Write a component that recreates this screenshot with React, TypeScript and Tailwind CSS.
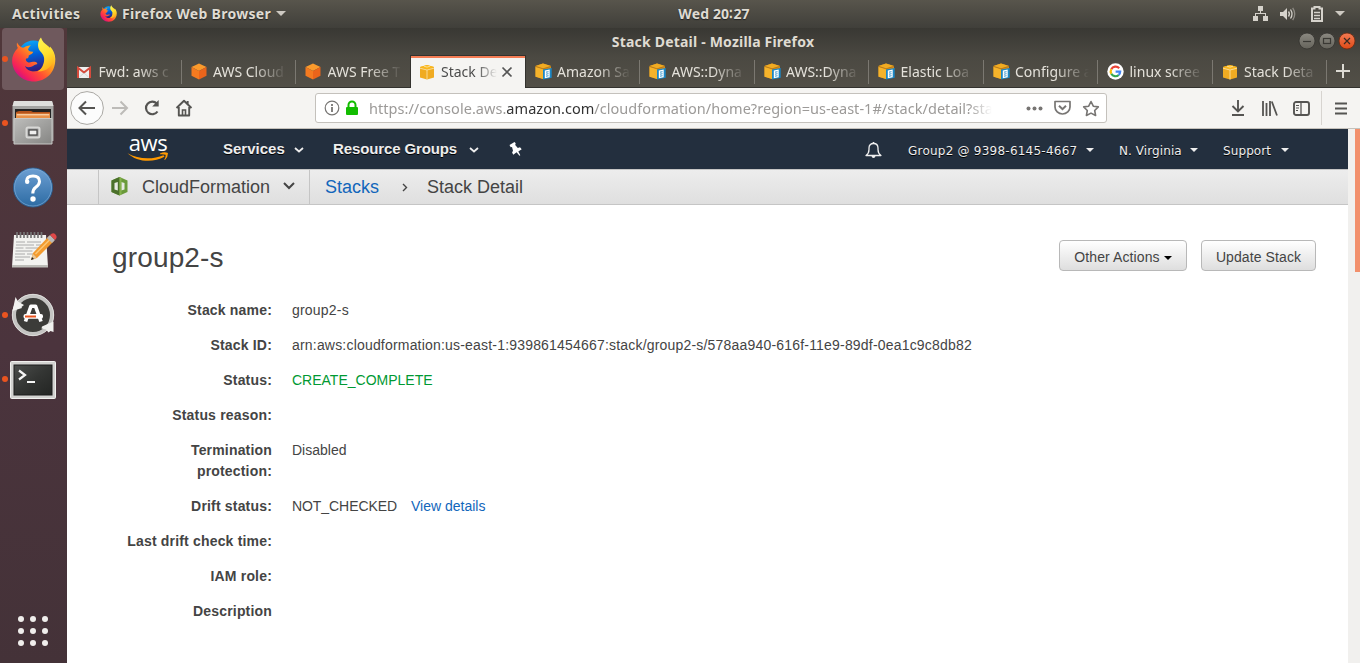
import React from "react";

const UBUNTU = "font-['Noto_Sans',sans-serif]";
const ARIAL = "font-['Liberation_Sans',sans-serif]";

function FirefoxIcon({ size, id }: { size: number; id: string }) {
  return (
    <svg width={size} height={size} viewBox="0 0 44 45" className="shrink-0">
      <defs>
        <linearGradient id={id + "a"} x1="0.95" y1="0.1" x2="0.15" y2="0.9">
          <stop offset="0" stopColor="#fff23f" />
          <stop offset="0.35" stopColor="#ffa01c" />
          <stop offset="0.62" stopColor="#ff5033" />
          <stop offset="0.85" stopColor="#f5215a" />
          <stop offset="1" stopColor="#c8108b" />
        </linearGradient>
        <linearGradient id={id + "b"} x1="0.4" y1="0" x2="0.6" y2="1">
          <stop offset="0" stopColor="#0ba6f7" />
          <stop offset="0.45" stopColor="#0060d8" />
          <stop offset="1" stopColor="#361475" />
        </linearGradient>
        <linearGradient id={id + "c"} x1="0.4" y1="0" x2="0.7" y2="1">
          <stop offset="0" stopColor="#fff34f" />
          <stop offset="0.5" stopColor="#ffdf2e" />
          <stop offset="1" stopColor="#ffa516" />
        </linearGradient>
      </defs>
      <circle cx="22" cy="19" r="15.5" fill={`url(#${id}b)`} />
      <path
        fill={`url(#${id}a)`}
        d="M5.500 5.500C5 8 5.500 9.500 6.300 11C2.500 15 0.500 19 0.600 24C1 36 11 44.500 22.500 44.500C34 44.500 44 36 43.800 22C43.700 17 41.500 12.500 38.500 9.500C39 14 36 19 33 22C34.500 29 29 34.500 22.500 34.500C18 34.500 14.500 32 13.500 29C17 31.500 21 29.500 23 28C25 27.500 26.500 27 25.500 26C23 23.500 19.500 26 17 25.500C14.500 25 14 22.500 14.500 21.500C16 21.500 17.500 21 17.200 18.500C20 17.500 21.500 16 21.700 14.800C18.500 15 16.500 13.500 16.500 12.300C17 11 18.500 9 19.500 8.200C15.500 8.500 13 10 11.500 10.800C8.500 10 7 8 5.500 5.500Z"
      />
      <path
        fill={`url(#${id}c)`}
        d="M29.500 0.500C26 4.500 25.500 10 28.500 14C32.500 18 34 22 31.500 28C30.500 31 28.500 33 26 34.500C34 35 42 29.500 42.500 21C42.800 15 39.500 11.500 36.500 9C33 6.500 30.500 4 29.500 0.500Z"
      />
    </svg>
  );
}

function Gmail() {
  return (
    <svg width="16" height="16" viewBox="0 0 16 16">
      <path d="M1 3h14v11H1z" fill="#eee" />
      <path d="M2 14V3.800L8 8.500l6-4.700V14" fill="none" stroke="#d54b3d" strokeWidth="2" />
      <path d="M3.500 13L8 9l4.500 4" fill="none" stroke="#c9c9c9" strokeWidth="0.700" />
    </svg>
  );
}

function OrangeCube() {
  return (
    <svg width="17" height="17" viewBox="0 0 17 17">
      <path d="M8 0.500L15.500 4 8 8 0.500 4z" fill="#fa9a2c" />
      <path d="M0.500 4L8 8v8.500L0.500 12.800z" fill="#f47a20" />
      <path d="M15.500 4L8 8v8.500l7.500-3.700z" fill="#ea641b" />
    </svg>
  );
}

function YellowBox() {
  return (
    <svg width="16" height="16" viewBox="0 0 16 16">
      <path d="M8 1l7 2v10.500L8 15.500 1 13.500V3z" fill="#f0ab22" />
      <path d="M1 3l7-2 7 2-7 2.200z" fill="#fbb91c" />
      <path d="M1 4.200L8 6l7-1.800M8 6v9.500M5 2.200L8 3.100l3-.9" fill="none" stroke="#fbe0a0" strokeWidth="0.900" />
    </svg>
  );
}

function BlueBox() {
  return (
    <svg width="17" height="17" viewBox="0 0 17 17">
      <path d="M0.500 3L8 0.500 16 3v8l-8 5-7.500-2.500z" fill="#d88e1b" />
      <path d="M0.500 3L8 5.500 16 3 8 0.500z" fill="#f0ab22" />
      <path d="M0.500 3.700L8 6v10L0.500 13.700z" fill="#f5b32b" />
      <path d="M0.500 3.400L8 5.800l8-2.400" fill="none" stroke="#a8701a" strokeWidth="0.700" />
      <path d="M8 6.500L16.700 5v9.800L8 16.500z" fill="#1b87c6" />
      <path d="M9.800 7.400l4.900-.9v7.800l-4.900.9z" fill="#fff" />
      <path d="M11 9.200l2.500-.5M11 11.200l2.500-.5M11 13.200l2.500-.5" stroke="#1b87c6" strokeWidth="0.900" />
    </svg>
  );
}

function GoogleIcon() {
  return (
    <svg width="17" height="17" viewBox="0 0 17 17">
      <circle cx="8.500" cy="8.500" r="8.200" fill="#fff" />
      <g fill="none" strokeWidth="2.200">
        <path d="M12.200 5.200A4.800 4.800 0 0 0 4.300 6.200" stroke="#ea4335" />
        <path d="M4.300 6.200A4.800 4.800 0 0 0 4.300 10.800" stroke="#fbbc05" />
        <path d="M4.300 10.800A4.800 4.800 0 0 0 11.700 12" stroke="#34a853" />
        <path d="M11.700 12A4.800 4.800 0 0 0 13.200 8.600H8.600" stroke="#4285f4" />
      </g>
    </svg>
  );
}

type TabInfo = { icon: React.ReactNode; title: string; active?: boolean; line?: boolean };

const tabs: TabInfo[] = [
  { icon: <Gmail />, title: "Fwd: aws c", line: true },
  { icon: <OrangeCube />, title: "AWS Cloud", line: true },
  { icon: <OrangeCube />, title: "AWS Free T" },
  { icon: <YellowBox />, title: "Stack De", active: true },
  { icon: <BlueBox />, title: "Amazon Sa", line: true },
  { icon: <BlueBox />, title: "AWS::Dyna", line: true },
  { icon: <BlueBox />, title: "AWS::Dyna", line: true },
  { icon: <BlueBox />, title: "Elastic Loa", line: true },
  { icon: <BlueBox />, title: "Configure a", line: true },
  { icon: <GoogleIcon />, title: "linux scree", line: true },
  { icon: <YellowBox />, title: "Stack Deta", line: true },
];

function Tab({ icon, title, active, line }: TabInfo) {
  return (
    <div
      className={
        active
          ? "relative z-10 -ml-[1px] flex h-[33px] w-[116px] shrink-0 items-center border-x border-t border-[#33322e] bg-[#f5f4f2] pl-[8px] shadow-[inset_0_2px_0_#f47c54]"
          : "flex h-[33px] w-[114.500px] shrink-0 items-center pl-[9px]"
      }
    >
      <span className="flex w-[22.500px] shrink-0 items-center">{icon}</span>
      <span
        className={
          active
            ? "w-[58px] overflow-hidden whitespace-nowrap text-[14px] leading-[20px] text-[#4c4c4c] [mask-image:linear-gradient(to_right,#000_36px,transparent_56px)]"
            : "w-[76px] overflow-hidden whitespace-nowrap text-[14px] leading-[20px] text-[#e4e1da] [mask-image:linear-gradient(to_right,#000_40px,transparent_74px)]"
        }
      >
        {title}
      </span>
      {active && (
        <svg width="12" height="12" viewBox="0 0 12 12" className="ml-[2px]">
          <path d="M1.500 1.500l9 9M10.500 1.500l-9 9" stroke="#555" strokeWidth="1.700" />
        </svg>
      )}
      {line && <span className="ml-auto h-[24px] w-px bg-[#7b7871]" />}
    </div>
  );
}

function TopBar() {
  return (
    <header className={`${UBUNTU} flex h-[28px] shrink-0 items-center bg-linear-to-b from-[#58554c] to-[#403f3a] text-[14px] font-bold text-[#dfdbd2] [text-shadow:0_1px_1px_#222]`}>
      <div className="flex w-[600px] items-center pb-[1px] pl-[12px]">
        <span className="w-[88px] text-[14px] tracking-[0.340px]">Activities</span>
        <FirefoxIcon size={17} id="fs" />
        <span className="ml-[5px] w-[149px] whitespace-nowrap text-[14px] tracking-[0.300px]">Firefox Web Browser</span>
        <svg width="10" height="5" className="ml-[5px]"><path d="M0 0h10L5 5z" fill="#cdc9c2" /></svg>
      </div>
      <div className="w-[228px] pb-[2px] text-center text-[14px] tracking-[0.150px]">Wed 20∶27</div>
      <div className="ml-auto flex items-center pb-[1px] pr-[15px]">
        <svg width="15" height="15" viewBox="0 0 15 15" fill="#d5d2cb" className="-mr-px">
          <path d="M5 0h5v5H8v2h5v3h2v5h-5v-5h2V8H3v2h2v5H0v-5h2V7h5V5H5z" />
        </svg>
        <svg width="16" height="14" viewBox="0 0 16 14" className="ml-[13px]">
          <path d="M0 5h3l4-4v12L3 9H0z" fill="#d5d2cb" />
          <path d="M8.500 4.500q1.800 2.500 0 5M10.500 2.500q3 4.500 0 9" stroke="#d5d2cb" strokeWidth="1.300" fill="none" />
          <path d="M12.700 0.800q4 6 0 12.400" stroke="#8e8b84" strokeWidth="1.300" fill="none" />
        </svg>
        <svg width="12" height="16" viewBox="0 0 12 16" className="ml-[15px]" fill="none" stroke="#d5d2cb">
          <path d="M1 2.500h2.500V1h5v1.500H11V15H1z" strokeWidth="2" />
          <path d="M3 6.500h6M3 9.500h6M3 12.500h6" strokeWidth="1.400" />
        </svg>
        <svg width="10" height="5" className="ml-[12px]"><path d="M0 0h10L5 5z" fill="#cdc9c2" /></svg>
      </div>
    </header>
  );
}

function DockItem({ children, running, selected }: { children: React.ReactNode; running?: boolean; selected?: boolean }) {
  return (
    <div className="flex h-[64px] w-[67px] items-start pl-[2px]">
      <div className={selected ? "flex h-[62px] w-[62px] items-center rounded-[4px] bg-[#6f595d]" : "flex h-[62px] w-[62px] items-center"}>
        <span className={running ? "h-[6px] w-[6px] rounded-full bg-[#e95420]" : "h-[6px] w-[6px]"} />
        <span className="flex w-[50px] justify-center">{children}</span>
      </div>
    </div>
  );
}

function Dock() {
  return (
    <aside className="flex w-[67px] shrink-0 flex-col bg-linear-to-b from-[#50373a] via-[#4b343d] to-[#443238]">
      <DockItem running selected><FirefoxIcon size={45} id="fl" /></DockItem>
      <DockItem running>
        <svg width="44" height="46" viewBox="0 0 44 46">
          <defs>
            <linearGradient id="cab" x1="0" y1="0" x2="1" y2="1"><stop offset="0" stopColor="#bdbdbb" /><stop offset="1" stopColor="#858583" /></linearGradient>
          </defs>
          <path d="M3 1h38l1.500 5v35H1.500V6z" fill="#a4a4a2" />
          <path d="M3 1h38l1.500 5h-41z" fill="#dededc" />
          <path d="M4 9h36v10H4z" fill="#222" />
          <path d="M5 12l3-1h12l2 1h17v3H5z" fill="#b4531c" />
          <path d="M5 13.500h34v5H5z" fill="#e99148" />
          <path d="M6 14.800h32" stroke="#fbe5c8" />
          <path d="M3 18.500h38V44H3z" fill="url(#cab)" stroke="#c8c8c6" strokeWidth="1" />
          <rect x="15.500" y="27.500" width="13" height="10" rx="1.500" fill="#999" stroke="#d8d8d6" strokeWidth="2" />
          <rect x="18" y="30" width="8" height="5" fill="#eee" stroke="#444" strokeWidth="1.200" />
        </svg>
      </DockItem>
      <DockItem>
        <svg width="42" height="42" viewBox="0 0 42 42">
          <defs>
            <linearGradient id="help" x1="0" y1="0" x2="0" y2="1"><stop offset="0" stopColor="#6d9fd3" /><stop offset="1" stopColor="#2c6ba3" /></linearGradient>
          </defs>
          <circle cx="21" cy="21.500" r="19.500" fill="url(#help)" stroke="#2b5c8e" />
          <circle cx="21" cy="21.500" r="18.500" fill="none" stroke="#7caad6" strokeWidth="0.700" />
          <path d="M14.500 15.500Q14.500 10 21 10Q27.500 10 27.500 15.500Q27.500 18.500 23.500 21.500Q20.800 23.500 20.800 27.500" fill="none" stroke="#fff" strokeWidth="3" />
          <circle cx="15.200" cy="15.800" r="2.200" fill="#fff" />
          <circle cx="21" cy="33" r="2.700" fill="#fff" />
        </svg>
      </DockItem>
      <DockItem>
        <svg width="46" height="38" viewBox="0 0 46 38" className="-mt-[2px] ml-[1px]">
          <path d="M3 4h32l2 32H1z" fill="#f3f3f0" />
          <path d="M1 34h36v2.500H1z" fill="#bdbdb8" />
          <path d="M6 1v6M9.500 1v6M13 1v6M16.500 1v6M20 1v6M23.500 1v6M27 1v6M30.500 1v6" stroke="#777" strokeWidth="1.700" />
          <path d="M5 11h9m2 0h14M5 14h18m2 0h6M4.500 17h8m2 0h14M4.500 20h17M4 23h10m2 0h6M4 26h15M4 29h9" stroke="#aaa" strokeWidth="1" />
          <path d="M20 29l2-7L38 5l5 5-17 17z" fill="#f39b2f" />
          <path d="M24.500 23L40 7.500" stroke="#fbc878" strokeWidth="1.500" />
          <path d="M20 29l2-6 3.500 3.500z" fill="#e6c79a" /><path d="M20 29l1-3 2 2z" fill="#222" />
          <path d="M36 7l3-3 5 5-3 3z" fill="#b9b9b9" />
          <path d="M39 4q3-3 5.500-.5T44 9z" fill="#e04848" />
        </svg>
      </DockItem>
      <DockItem running>
        <svg width="44" height="44" viewBox="0 0 44 44">
          <circle cx="22" cy="22" r="19" fill="#3c3c39" stroke="#c4c4c2" strokeWidth="4" />
          <circle cx="22" cy="22" r="20.700" fill="none" stroke="#e8e8e6" strokeWidth="0.800" />
          <path d="M4.500 4l2.500 4.500 6 3.500-2.500 2 .5 1L1.500 18z" fill="#f1f1ef" />
          <path d="M31 33.500l11.500-5v10.500l-3 -1-2 1.500-2.500-3-4.500-1z" fill="#f1f1ef" />
          <path d="M14.500 28.500L20 13.200h4.500l5.500 15.300" fill="none" stroke="#fff" strokeWidth="3.600" strokeLinejoin="round" />
          <rect x="12.500" y="21" width="19.500" height="4.800" rx="2" fill="#fff" />
          <rect x="14" y="22.500" width="11" height="2" fill="#e95420" />
        </svg>
      </DockItem>
      <DockItem running>
        <svg width="46" height="38" viewBox="0 0 46 38" className="mt-[2px]">
          <defs>
            <linearGradient id="term" x1="0" y1="0" x2="1" y2="1"><stop offset="0" stopColor="#4b4d4b" /><stop offset="0.500" stopColor="#333533" /><stop offset="1" stopColor="#232523" /></linearGradient>
          </defs>
          <rect x="0.500" y="0.500" width="45" height="37" rx="1" fill="#d2d2d0" stroke="#f0f0ee" />
          <rect x="4" y="4" width="38" height="30" fill="url(#term)" stroke="#1c1c1c" />
          <path d="M9 9.500l6 4.500-6 4.500" fill="none" stroke="#f5f5f5" strokeWidth="2.200" />
          <path d="M17 21h8" stroke="#f5f5f5" strokeWidth="2" />
        </svg>
      </DockItem>
      <div className="mt-auto mb-[17px] ml-[18px] grid w-[30px] grid-cols-3 gap-[6px]">
        {Array.from({ length: 9 }, (_, i) => <span key={i} className="h-[6px] w-[6px] rounded-full bg-[#f0eeec]" />)}
      </div>
    </aside>
  );
}

function BrowserChrome() {
  return (
    <div className={`${UBUNTU} shrink-0`}>
      <div className="h-[60px] bg-linear-to-b from-[#393833] via-[#4b4942] via-50% to-[#524f47] border-b border-[#33322e] flex flex-col">
        <div className="flex h-[27px] shrink-0 items-center">
          <div className="w-[1239px] pl-[53px] text-center text-[14px] font-bold tracking-[0.200px] text-[#dfdbd2]">Stack Detail - Mozilla Firefox</div>
          <svg width="50" height="18" viewBox="0 0 50 18" className="-ml-[8px] -mt-px overflow-visible">
            <defs>
              <linearGradient id="btn" x1="0" y1="0" x2="0" y2="1"><stop offset="0" stopColor="#8b8981" /><stop offset="1" stopColor="#65635b" /></linearGradient>
              <linearGradient id="cls" x1="0" y1="0" x2="0" y2="1"><stop offset="0" stopColor="#f37b54" /><stop offset="1" stopColor="#df4a16" /></linearGradient>
            </defs>
            <circle cx="9" cy="9" r="8" fill="url(#btn)" stroke="#33322e" strokeWidth="0.800" />
            <path d="M5 9.500h8" stroke="#3a3934" strokeWidth="1.200" />
            <circle cx="29" cy="9" r="8" fill="url(#btn)" stroke="#33322e" strokeWidth="0.800" />
            <rect x="25.500" y="6.500" width="7" height="5" fill="none" stroke="#3a3934" strokeWidth="1.200" />
            <circle cx="49" cy="9" r="8" fill="url(#cls)" stroke="#6a2a12" strokeWidth="0.800" />
            <path d="M46 6l6 6M52 6l-6 6" stroke="#3a2a22" strokeWidth="1.200" />
          </svg>
        </div>
        <div className="flex h-[33px] items-center">
          {tabs.map((t, i) => <Tab key={i} {...t} />)}
          <svg width="14" height="14" viewBox="0 0 14 14" className="ml-[9px] -mt-[2px]"><path d="M7 0v14M0 7h14" stroke="#dcdad3" strokeWidth="2" /></svg>
        </div>
      </div>
      <div className="flex h-[41px] items-center border-b border-[#c5c1bb] bg-[#f5f4f2] pl-[3px]">
        <svg width="34" height="34" viewBox="0 0 34 34" fill="none">
          <circle cx="17" cy="17" r="16.400" fill="#fcfcfc" stroke="#aaa8a4" />
          <path d="M25 17H10M16 10.500L9.500 17l6.500 6.500" stroke="#555452" strokeWidth="2" />
        </svg>
        <svg width="18" height="16" viewBox="0 0 18 16" fill="none" className="ml-[7px]"><path d="M1 8h15M9.500 1.500L16 8l-6.500 6.500" stroke="#bdbbb8" strokeWidth="2" /></svg>
        <svg width="18" height="16" viewBox="0 0 18 16" fill="none" className="ml-[14px]"><path d="M13.800 3.500A6.300 6.300 0 1 0 14.500 11.500" stroke="#555452" strokeWidth="2.200" /><path d="M15.700 0v6.500H9.200z" fill="#555452" /></svg>
        <svg width="18" height="18" viewBox="0 0 18 18" fill="none" className="ml-[14px]"><path d="M1.500 9L9 1.800 16.500 9M3.800 8v8.500h10.400V8M12.700 2v3" stroke="#555452" strokeWidth="1.900" strokeLinejoin="round" /><path d="M7.500 16v-5h3v5" stroke="#555452" strokeWidth="1.600" /></svg>
        <div className="ml-[122px] flex h-[30px] w-[792px] items-center rounded-[3px] border border-[#c4c1bc] bg-white pl-[8px] pr-[6px]">
          <svg width="16" height="16" viewBox="0 0 16 16" fill="none" stroke="#777573"><circle cx="8" cy="8" r="6.800" strokeWidth="1.200" /><path d="M8 7v5M8 4v2" strokeWidth="1.800" /></svg>
          <svg width="14" height="16" viewBox="0 0 14 16" className="ml-[5px]"><path d="M3.500 7V5a3.500 3.500 0 0 1 7 0v2" fill="none" stroke="#12bc00" strokeWidth="2" /><rect x="1" y="7" width="12" height="8" rx="1" fill="#12bc00" /></svg>
          <div className="ml-[10px] mt-px w-[623px] overflow-hidden whitespace-nowrap text-[14.500px] tracking-[0.040px] text-[#9c9a98] [mask-image:linear-gradient(to_right,#000_600px,transparent_623px)]">
            https://console.aws.<span className="text-[#333]">amazon.com</span>/cloudformation/home?region=us-east-1#/stack/detail?stac
          </div>
          <svg width="17" height="5" className="ml-auto" fill="#777573"><circle cx="2.500" cy="2.500" r="2" /><circle cx="8.500" cy="2.500" r="2" /><circle cx="14.500" cy="2.500" r="2" /></svg>
          <svg width="17" height="16" viewBox="0 0 17 16" className="ml-[11px]" fill="none" stroke="#777573"><path d="M1 1.500h15v5.500a7.500 7 0 0 1-15 0z" strokeWidth="1.700" strokeLinejoin="round" /><path d="M5 5.800l3.500 3.400L12 5.800" strokeWidth="2" /></svg>
          <svg width="18" height="17" viewBox="0 0 18 17" className="ml-[11px]" fill="none"><path d="M9 1.500l2.300 4.700 5 .7-3.600 3.600.9 5L9 13.100l-4.600 2.400.9-5L1.700 6.900l5-.7z" stroke="#777573" strokeWidth="1.600" strokeLinejoin="round" /></svg>
        </div>
        <svg width="14" height="16" viewBox="0 0 14 16" className="ml-[124px]" fill="none" stroke="#555452" strokeWidth="1.900"><path d="M7 0v11M1.500 6L7 11.500 12.500 6M1 15h12" /></svg>
        <svg width="17" height="15" viewBox="0 0 17 15" className="ml-[16px]" stroke="#555452" strokeWidth="1.800"><path d="M2 0v15M5.500 2v13M9 0v15M10.800 0.500L16 14.500" /></svg>
        <svg width="17" height="15" viewBox="0 0 17 15" className="ml-[15px]" fill="none" stroke="#555452"><rect x="1" y="1" width="15" height="13" rx="2" strokeWidth="1.900" /><path d="M8 1v13" strokeWidth="1.300" /><path d="M3 4.500h3M3 7h3M3 9.500h2" strokeWidth="1" /></svg>
        <span className="ml-[11px] h-[34px] w-px bg-[#d7d4d0]" />
        <svg width="13" height="13" viewBox="0 0 13 13" className="ml-[13px]"><path d="M0 1.500h12M0 6.500h12M0 11.500h12" stroke="#555452" strokeWidth="1.900" /></svg>
      </div>
    </div>
  );
}

function Chevron({ className, color = "#eee" }: { className: string; color?: string }) {
  return <svg width="10" height="6" viewBox="0 0 10 6" fill="none" className={className}><path d="M1 1l4 3.500L9 1" stroke={color} strokeWidth="1.800" /></svg>;
}
function Caret({ className, color = "#eee" }: { className: string; color?: string }) {
  return <svg width="8" height="4" viewBox="0 0 8 4" className={className}><path d="M0 0h8L4 4z" fill={color} /></svg>;
}

function AwsNav() {
  return (
    <nav className={`${ARIAL} flex h-[40px] shrink-0 items-center bg-[#232f3e] text-[15px] font-bold text-[#eee] [text-shadow:0_1px_0_#000]`}>
      <div className="ml-[60px] flex w-[42px] flex-col items-center">
        <span className="h-[17px] font-['Open_Sans',sans-serif] text-[22px] font-medium leading-[12px] tracking-[-0.500px] text-white [text-shadow:none]">aws</span>
        <svg width="42" height="10" viewBox="0 0 42 10" className="-mt-px">
          <path d="M0.500 1.200C11 7.500 26 7.700 36.500 3.200L37.500 4.800C26 11 10 10.200 0.500 1.200Z" fill="#f90" />
          <path d="M33 1.500Q37-.5 41 1Q41 5 38 8L37.300 7.700Q39 4.500 38.600 2.700Q36.500 2 33 2.300Z" fill="#f90" />
        </svg>
      </div>
      <span className="ml-[54px] w-[61px]">Services</span>
      <Chevron className="ml-[10px] mt-[2px]" />
      <span className="ml-[29px] w-[125px] whitespace-nowrap tracking-[-0.120px]">Resource Groups</span>
      <Chevron className="ml-[11px] mt-[2px]" />
      <svg width="13" height="14" viewBox="0 0 13 14" className="ml-[30px]"><path d="M0.500 3L5.500 0l1.200 1.300-.5 1.700 2.600 3L11 5.300l1.700 2-3.400 2.200 2 3.800-.8.400-2.900-3.500L4.300 12.700l-1.200-2.200.9-1.700L3 5l-1.300.2z" fill="#fff" /></svg>
      <div className="ml-auto flex items-center font-['DejaVu_Sans',sans-serif] text-[12px] font-normal tracking-[0.230px]">
        <svg width="17" height="18" viewBox="0 0 17 18" fill="none" className="mt-px"><path d="M1 14.500Q4 12.500 4 8.500V7Q4 2.500 8.500 2.500T13 7v1.500Q13 12.500 16 14.500z" stroke="#eee" strokeWidth="1.300" strokeLinejoin="round" /><path d="M6.500 15h4q-.3 2-2 2t-2-2zM7.700 1h1.600v2H7.700z" fill="#eee" /></svg>
        <span className="ml-[26px] mt-[3px] w-[170px] whitespace-nowrap">Group2 @ 9398-6145-4667</span>
        <Caret className="ml-[8px] mt-[2px]" />
        <span className="ml-[25px] mt-[3px] w-[63px] whitespace-nowrap tracking-[0.080px]">N. Virginia</span>
        <Caret className="ml-[8px] mt-[2px]" />
        <span className="ml-[25px] mt-[3px] w-[50px] tracking-[0.100px]">Support</span>
        <Caret className="ml-[8px] mr-[59px] mt-[2px]" />
      </div>
    </nav>
  );
}

function Crumbs() {
  return (
    <div className={`${ARIAL} flex h-[36px] shrink-0 items-center border-y border-[#c5c5c5] bg-linear-to-b from-[#ededed] to-[#dfdfdf] text-[18px] text-[#444]`}>
      <span className="ml-[31px] h-full w-px bg-[#c5c5c5]" />
      <svg width="17" height="19" viewBox="0 0 17 19" className="ml-[12px] -mt-[2px]">
        <path d="M8.500 0L16.500 3.500v11.500L8.500 18.500 0.500 15V3.500z" fill="#6a9a3a" />
        <path d="M8.500 0v18.500L0.500 15V3.500z" fill="#4b702b" />
        <path d="M3.500 6l3.300-1v8.500l-3.300-1zM10.200 5l3.300 1v6.500l-3.300 1z" fill="#e7e9e3" />
        <path d="M8.500 0l2 .9v16.700l-2 .9z" fill="#85b24d" />
      </svg>
      <span className="ml-[14px] w-[129px] whitespace-nowrap">CloudFormation</span>
      <svg width="12" height="8" viewBox="0 0 12 8" className="ml-[12px] -mt-[2px]" fill="none"><path d="M1 1l5 5 5-5" stroke="#444" strokeWidth="2" /></svg>
      <span className="ml-[14px] h-full w-px bg-[#c5c5c5]" />
      <a className="ml-[15px] w-[55px] text-[#1166bb]">Stacks</a>
      <svg width="6" height="9" viewBox="0 0 6 9" className="ml-[22px] mt-[1px]" fill="none"><path d="M1 1l3.500 3.500L1 8" stroke="#444" strokeWidth="1.400" /></svg>
      <span className="ml-[19px] whitespace-nowrap">Stack Detail</span>
    </div>
  );
}

const rows: { label: React.ReactNode; value?: React.ReactNode }[] = [
  { label: "Stack name:", value: <span className="tracking-[0.200px]">group2-s</span> },
  { label: "Stack ID:", value: <span className="tracking-[0.192px]">arn:aws:cloudformation:us-east-1:939861454667:stack/group2-s/578aa940-616f-11e9-89df-0ea1c9c8db82</span> },
  { label: "Status:", value: <span className="text-[#093]">CREATE_COMPLETE</span> },
  { label: "Status reason:" },
  { label: <>Termination<br />protection:</>, value: "Disabled" },
  { label: "Drift status:", value: <><span className="tracking-[-0.070px]">NOT_CHECKED</span><a className="ml-[14px] text-[#1166bb]">View details</a></> },
  { label: "Last drift check time:" },
  { label: "IAM role:" },
  { label: "Description" },
];

function Detail() {
  const button = "flex h-[31px] items-center justify-center rounded-[4px] border border-[#b8b8b8] bg-linear-to-b from-white to-[#dedede] pt-[4px] text-[14px] tracking-[0.100px]";
  return (
    <main className={`${ARIAL} flex-1 bg-white text-[#444]`}>
      <div className="flex items-start justify-between pl-[45px] pr-[32px] pt-[35px]">
        <h1 className="pt-[1px] text-[28px] leading-[34px] tracking-[0.150px]">group2-s</h1>
        <div className="flex gap-[14px]">
          <button className={`${button} w-[128px]`}>Other Actions<Caret className="ml-[4px]" color="#000" /></button>
          <button className={`${button} w-[115px]`}>Update Stack</button>
        </div>
      </div>
      <dl className="flex flex-col gap-[14px] pt-[25px] text-[14px] leading-[21px]">
        {rows.map((r, i) => (
          <div key={i} className="flex">
            <dt className="w-[205px] shrink-0 text-right font-bold tracking-[0.180px]">{r.label}</dt>
            <dd className="ml-[20px] whitespace-nowrap">{r.value}</dd>
          </div>
        ))}
      </dl>
    </main>
  );
}

export default function App() {
  return (
    <div className="flex h-[663px] w-[1360px] flex-col overflow-hidden bg-white">
      <TopBar />
      <div className="flex min-h-0 flex-1">
        <Dock />
        <div className="flex min-w-0 flex-1 flex-col">
          <BrowserChrome />
          <div className="flex min-h-0 flex-1">
            <div className="flex w-[1281px] flex-col overflow-hidden">
              <AwsNav />
              <Crumbs />
              <Detail />
            </div>
            <div className="flex flex-1 justify-end bg-[#f1f0ee]">
              <span className="h-[143px] w-[5px] bg-[#f2906c]" />
            </div>
          </div>
        </div>
      </div>
    </div>
  );
}
